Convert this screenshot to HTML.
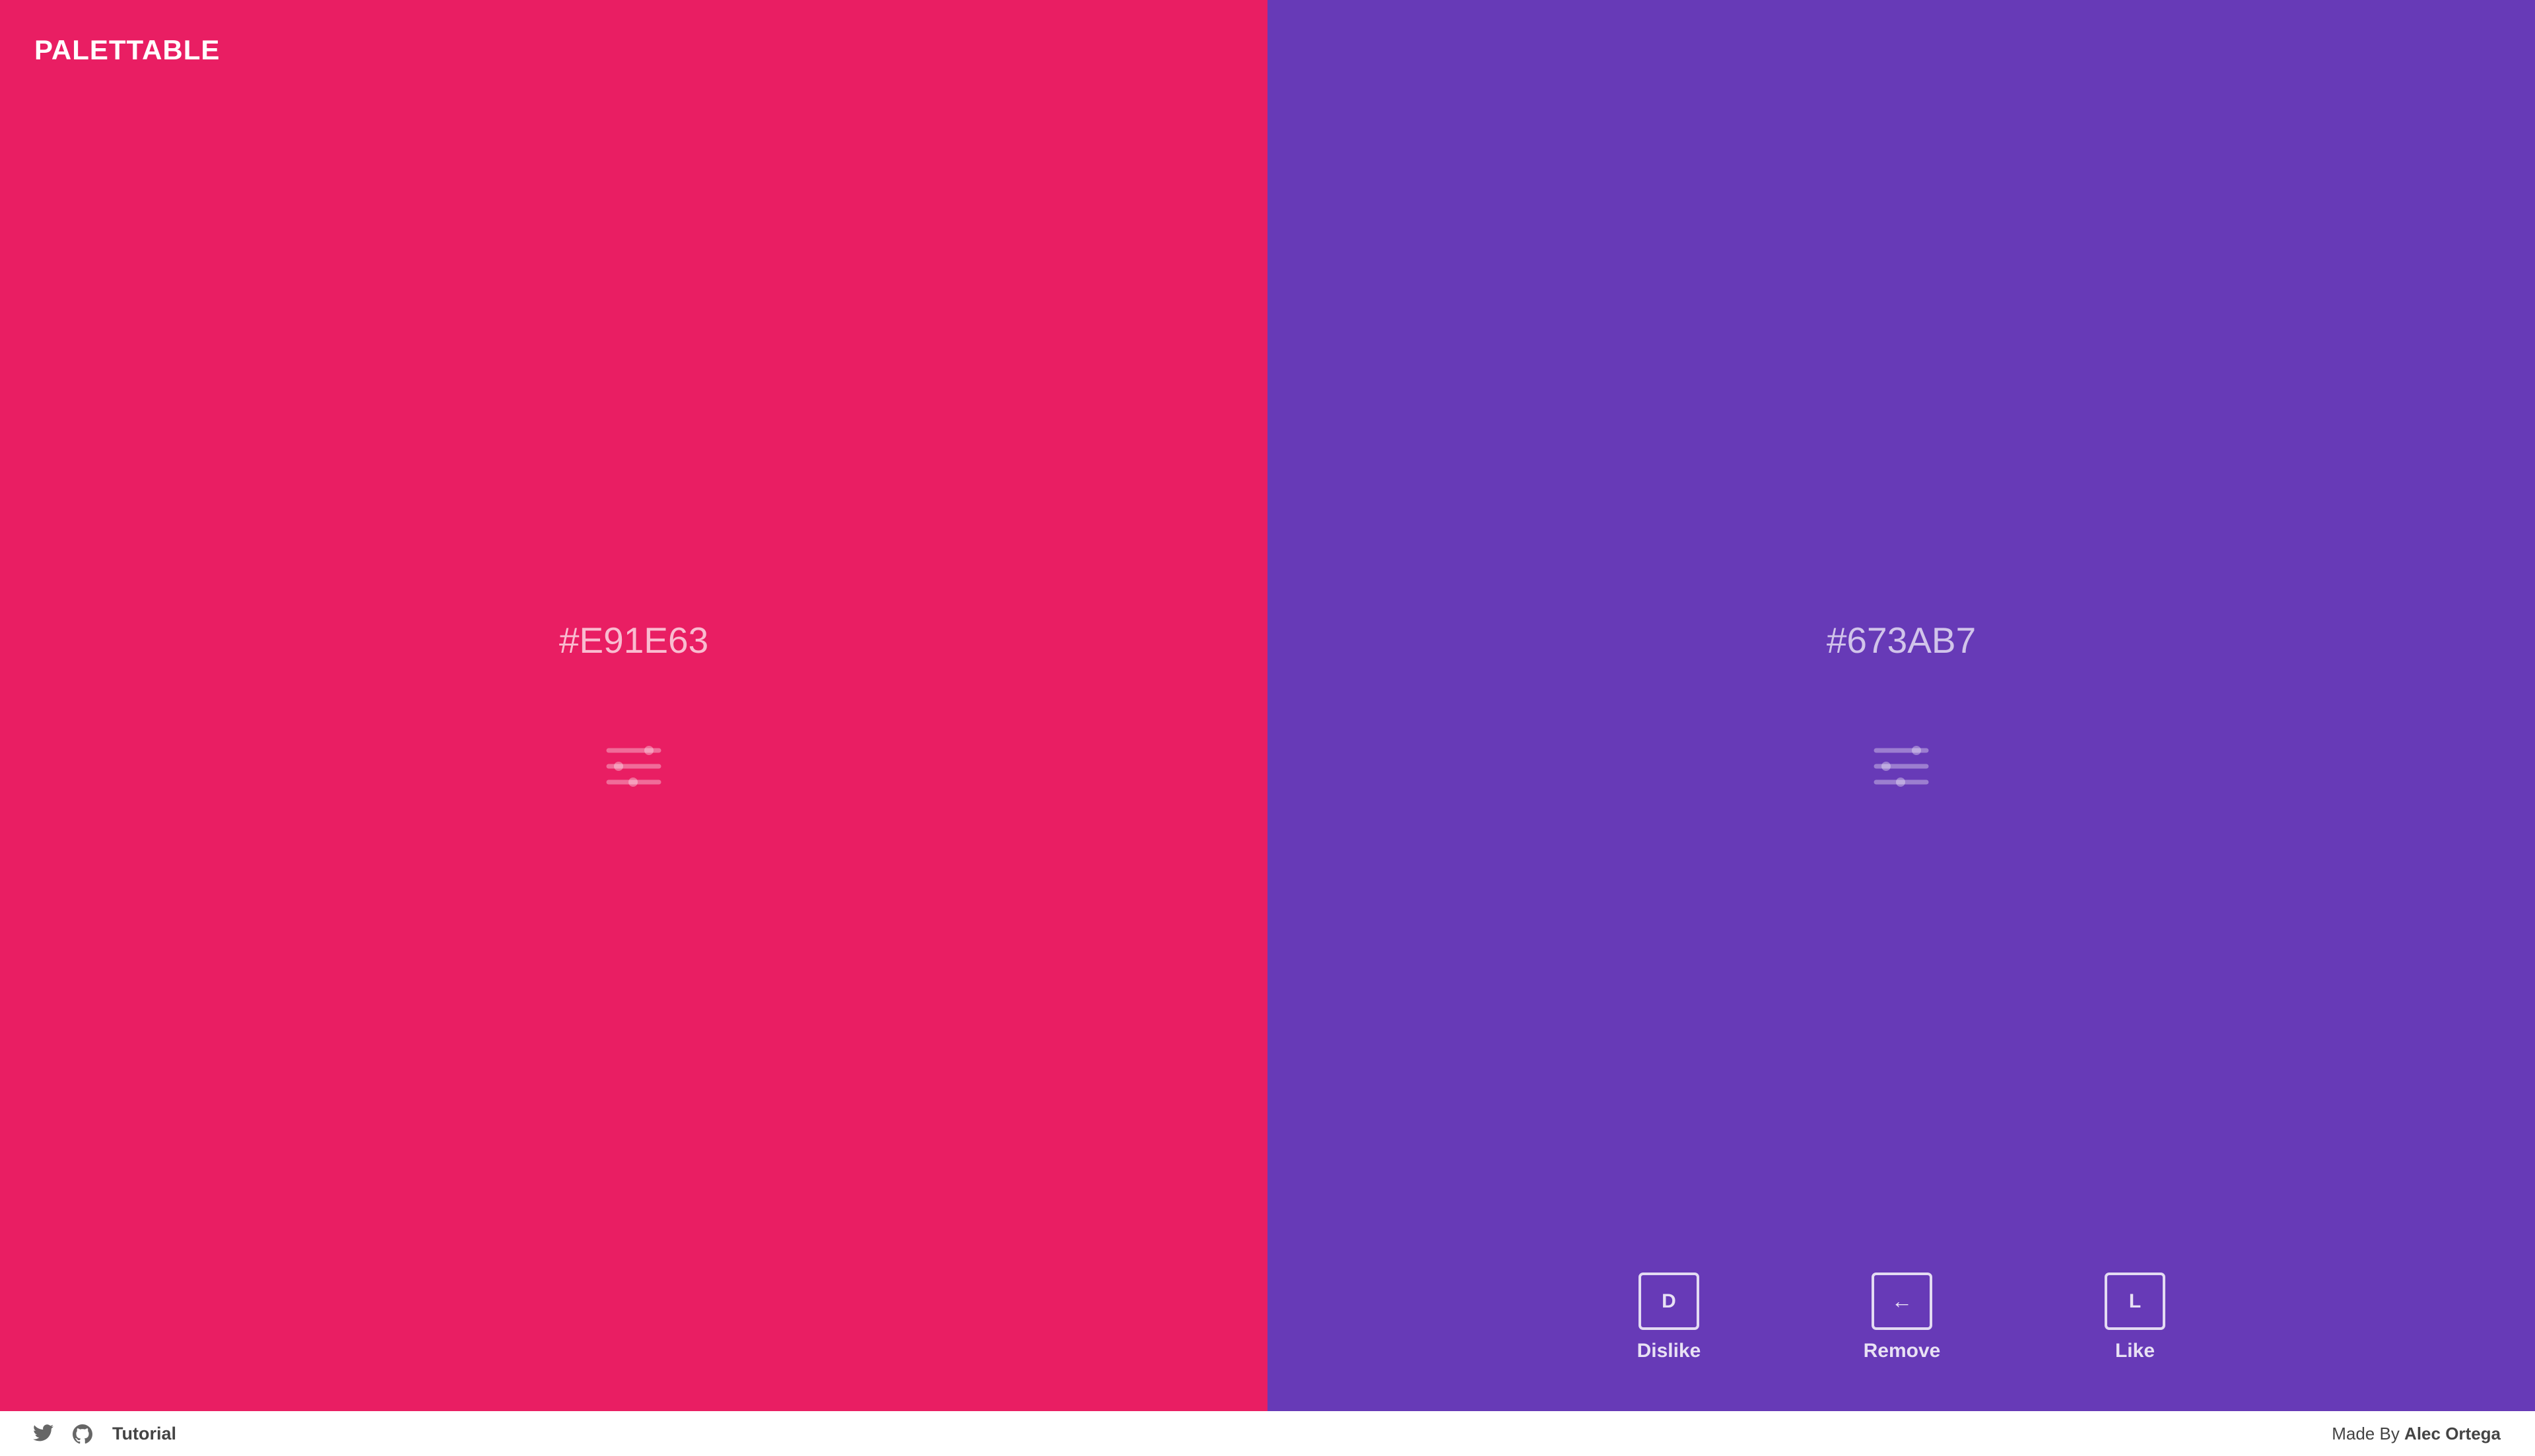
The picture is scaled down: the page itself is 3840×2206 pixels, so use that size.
<!DOCTYPE html>
<html><head><meta charset="utf-8">
<style>
*{margin:0;padding:0;box-sizing:border-box}
html,body{width:3840px;height:2206px;overflow:hidden;background:#fff;font-family:"Liberation Sans",sans-serif}
.p{position:absolute;top:0;height:2138px;width:1920px}
.l{left:0;background:#E91E63}
.r{left:1920px;background:#673AB7}
.logo{position:absolute;left:52px;top:52px;font-size:42px;font-weight:bold;color:#fff;letter-spacing:1px}
.hex{position:absolute;left:0;width:1920px;top:935px;text-align:center;font-size:55px;color:rgba(255,255,255,.7);line-height:70px}
.sl{position:absolute;top:1125px}
.btn{position:absolute;top:1928px;width:92px;height:87px;border:4px solid rgba(255,255,255,.82);border-radius:7px;color:rgba(255,255,255,.85);font-weight:bold;font-size:30px;display:flex;align-items:center;justify-content:center}
.lab{position:absolute;top:2030px;width:200px;text-align:center;font-weight:bold;font-size:30px;color:rgba(255,255,255,.85)}
.f{position:absolute;top:2138px;height:68px;left:0;width:3840px;background:#fff}
.tut{position:absolute;left:170px;top:2157px;font-size:27px;font-weight:bold;color:#444}
.made{position:absolute;right:52px;top:2157px;font-size:26px;color:#444}
</style></head><body>
<div class="p l">
<div class="logo">PALETTABLE</div>
<div class="hex">#E91E63</div>
<svg class="sl" style="left:915px" width="90" height="72" viewBox="915 1125 90 72">
<g stroke="rgba(255,255,255,.35)" stroke-width="7" stroke-linecap="round" fill="none">
<line x1="922" y1="1137" x2="998" y2="1137"/><line x1="922" y1="1161" x2="998" y2="1161"/><line x1="922" y1="1185" x2="998" y2="1185"/></g>
<g fill="rgba(255,255,255,.35)"><circle cx="983" cy="1137" r="7"/><circle cx="937" cy="1161" r="7"/><circle cx="959" cy="1185" r="7"/></g>
</svg>
</div>
<div class="p r">
<div class="hex">#673AB7</div>
<svg class="sl" style="left:915px" width="90" height="72" viewBox="915 1125 90 72">
<g stroke="rgba(255,255,255,.35)" stroke-width="7" stroke-linecap="round" fill="none">
<line x1="922" y1="1137" x2="998" y2="1137"/><line x1="922" y1="1161" x2="998" y2="1161"/><line x1="922" y1="1185" x2="998" y2="1185"/></g>
<g fill="rgba(255,255,255,.35)"><circle cx="983" cy="1137" r="7"/><circle cx="937" cy="1161" r="7"/><circle cx="959" cy="1185" r="7"/></g>
</svg>
</div>
<div class="btn" style="left:2482px">D</div>
<div class="lab" style="left:2428px">Dislike</div>
<div class="btn" style="left:2835px;font-weight:normal;font-size:32px">&larr;</div>
<div class="lab" style="left:2781px">Remove</div>
<div class="btn" style="left:3188px">L</div>
<div class="lab" style="left:3134px">Like</div>
<div class="f"></div>
<svg style="position:absolute;left:50px;top:2158px" width="31" height="26" viewBox="0 0 24 20"><path fill="#666" d="M24 2.4c-.9.4-1.8.7-2.8.8 1-.6 1.8-1.6 2.2-2.7-1 .6-2 1-3.1 1.2C19.3.7 18 .1 16.6.1c-2.7 0-4.9 2.2-4.9 4.9 0 .4 0 .8.1 1.1C7.7 5.9 4.1 4 1.700 1 1.2 1.8 1 2.6 1 3.5c0 1.7.9 3.2 2.2 4.1-.8 0-1.600-.2-2.200-.6v.1c0 2.4 1.700 4.400 3.900 4.800-.4.1-.8.2-1.300.2-.3 0-.6 0-.9-.1.6 2 2.400 3.400 4.600 3.400-1.700 1.300-3.800 2.100-6.100 2.100-.4 0-.8 0-1.200-.1 2.200 1.400 4.800 2.200 7.500 2.200 9.100 0 14-7.500 14-14v-.6c1-.7 1.800-1.600 2.500-2.600z"/></svg>
<svg style="position:absolute;left:110px;top:2158px" width="30" height="30" viewBox="0 0 16 16"><path fill="#666" d="M8 0C3.6 0 0 3.6 0 8c0 3.5 2.3 6.5 5.5 7.6.4.1.5-.2.5-.4v-1.4c-2.2.5-2.7-1-2.7-1-.4-.9-.9-1.2-.9-1.2-.7-.5.1-.5.1-.5.8.1 1.2.8 1.2.8.7 1.2 1.9.9 2.3.7.1-.5.3-.9.5-1.1-1.8-.2-3.6-.9-3.6-4 0-.9.3-1.6.8-2.1-.1-.2-.4-1 .1-2.100 0 0 .7-.2 2.200.8.6-.2 1.300-.3 2-.3s1.400.1 2 .3c1.500-1 2.200-.8 2.200-.8.4 1.100.2 1.900.1 2.100.5.6.8 1.300.8 2.100 0 3.100-1.900 3.700-3.600 3.900.3.3.5.8.5 1.500v2.200c0 .2.1.5.6.4C13.700 14.500 16 11.500 16 8c0-4.400-3.600-8-8-8z"/></svg>
<div class="tut">Tutorial</div>
<div class="made">Made By <b>Alec Ortega</b></div>
</body></html>
